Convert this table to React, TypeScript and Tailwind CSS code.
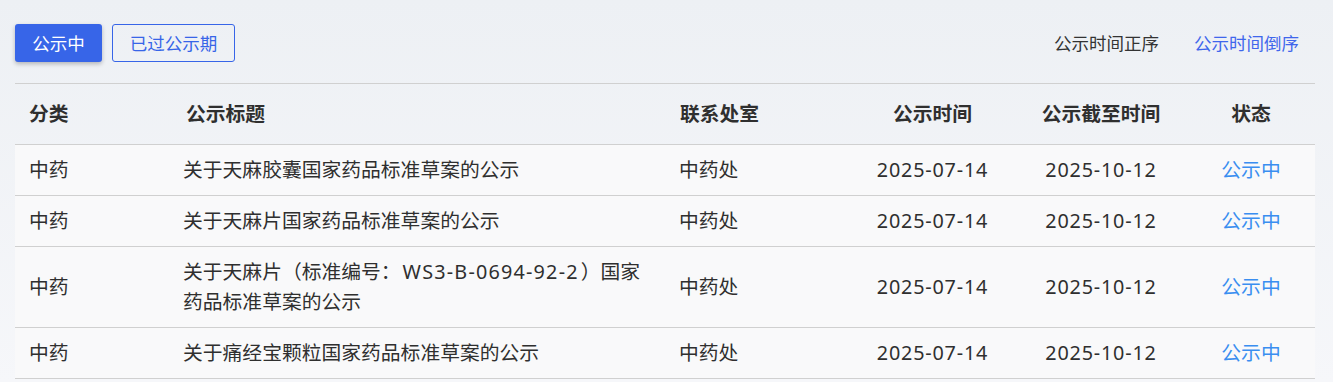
import React from "react";

const rows = [
  { cat: "中药", title: [["关于天麻胶囊国家药品标准草案的公示"]], dept: "中药处", date: "2025-07-14", end: "2025-10-12", status: "公示中" },
  { cat: "中药", title: [["关于天麻片国家药品标准草案的公示"]], dept: "中药处", date: "2025-07-14", end: "2025-10-12", status: "公示中" },
  { cat: "中药", title: [["关于天麻片（标准编号：", "WS3-B-0694-92-2", "）国家"], ["药品标准草案的公示"]], dept: "中药处", date: "2025-07-14", end: "2025-10-12", status: "公示中" },
  { cat: "中药", title: [["关于痛经宝颗粒国家药品标准草案的公示"]], dept: "中药处", date: "2025-07-14", end: "2025-10-12", status: "公示中" },
];

const font = { fontFamily: '"Noto Sans", "Noto Sans CJK SC", sans-serif' };

export default function App() {
  return (
    <div
      className="min-h-[382px] w-full bg-gradient-to-b from-[#edf0f4] to-[#f6f7fa] pl-[15px] pr-[18px] pt-[24px] text-[#2f2f2f]"
      style={font}
    >
      <div className="flex items-center justify-between mb-[21px]">
        <div className="flex items-center gap-[10px]">
          <button className="h-[38px] w-[87px] rounded-[3px] bg-[#3765e8] text-white text-[17.5px] shadow-[0_2px_4px_rgba(0,0,0,0.25)]">
            公示中
          </button>
          <button className="h-[38px] w-[123px] rounded-[3px] border border-[#3765e8] text-[#3765e8] text-[17.5px]">
            已过公示期
          </button>
        </div>
        <div className="flex items-center gap-[35px] pr-[16px] text-[17.5px]">
          <span className="text-[#333]">公示时间正序</span>
          <span className="text-[#3f66ec]">公示时间倒序</span>
        </div>
      </div>

      <div className="text-[19.8px] leading-[30px]">
        <div className="grid grid-cols-[154px_496px_185px_165px_172px_1fr] border-t border-b border-[#d0d0d0] font-bold">
          <div className="py-[15px] pl-[14px]">分类</div>
          <div className="py-[15px] pl-[17px]">公示标题</div>
          <div className="py-[15px] pl-[15px]">联系处室</div>
          <div className="py-[15px] text-center">公示时间</div>
          <div className="py-[15px] text-center">公示截至时间</div>
          <div className="py-[15px] text-center">状态</div>
        </div>
        {rows.map((r, i) => (
          <div
            key={i}
            className="grid grid-cols-[154px_496px_185px_165px_172px_1fr] items-center border-b border-[#d0d0d0] bg-[#f9f9fa]"
          >
            <div className="py-[10px] pl-[14px]">{r.cat}</div>
            <div className="py-[10px] pl-[14px] pr-[14px]">
              {r.title.map((line, j) => (
                <div key={j} className="whitespace-nowrap">
                  {line.map((seg, k) =>
                    k === 1 ? (
                      <span key={k} className="tracking-[1.2px] px-[2px]">{seg}</span>
                    ) : (
                      <span key={k}>{seg}</span>
                    )
                  )}
                </div>
              ))}
            </div>
            <div className="py-[10px] pl-[14px]">{r.dept}</div>
            <div className="py-[10px] text-center tracking-[0.8px]">{r.date}</div>
            <div className="py-[10px] text-center tracking-[0.8px]">{r.end}</div>
            <div className="py-[10px] text-center text-[#3a8ef0]">{r.status}</div>
          </div>
        ))}
      </div>
    </div>
  );
}
